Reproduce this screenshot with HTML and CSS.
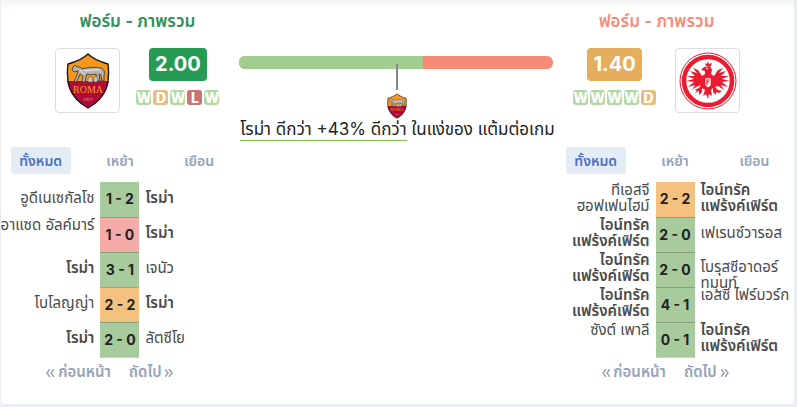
FILE: index.html
```html
<!DOCTYPE html>
<html lang="th">
<head>
<meta charset="utf-8">
<meta name="viewport" content="width=device-width,initial-scale=1.0">
<title>ฟอร์ม - ภาพรวม</title>
<link rel="stylesheet" href="styles.css">
</head>
<body>

<!-- shared drawings -->
<svg class="defs" aria-hidden="true">
  <symbol id="roma" viewBox="0 0 44 56">
    <path d="M22 1C17 6 9 9 2 11C0 27 2 44 22 55C42 44 44 27 42 11C35 9 27 6 22 1Z" fill="#f7981d"/>
    <path d="M1 28H43C41 40 34 49 22 55C10 49 3 40 1 28Z" fill="#b20a38"/>
    <path d="M22 1C17 6 9 9 2 11C0 27 2 44 22 55C42 44 44 27 42 11C35 9 27 6 22 1Z" fill="none" stroke="#191919" stroke-width="1.4"/>
    <path d="M7 14L9 12L11 14L14 14L16 16C21 14 29 14 35 15C38 16 39 19 38 23L38 28H36L35 22L33 21L34 28H31L30 21C27 22 24 22 21 21L20 24L19 29H16L17 23L14 21L12 26L10 29H8L11 22L12 18L8 19L6 17Z" fill="#b4b4b1" stroke="#30302d" stroke-width=".8"/>
    <path d="M17 17C22 19 27 16 34 17M14 17L18 21" fill="none" stroke="#eee" stroke-width="1"/>
    <path d="M22 29L22 26L24 23L26 25L27 29ZM28 29L28 25L30 23L32 26L31 29Z" fill="#d1c8bd" stroke="#41413e" stroke-width=".5"/>
    <text x="22" y="40" class="roma-name">ROMA</text>
    <text x="22" y="48" class="roma-year">1927</text>
  </symbol>
  <symbol id="eintracht" viewBox="0 0 58 58">
    <circle cx="29" cy="29" r="28" fill="#fff" stroke="#ed1b2f" stroke-width="1"/>
    <circle cx="29" cy="29" r="24" fill="#fff" stroke="#ed1b2f" stroke-width="4.5"/>
    <path d="M26 11L28 12L29 9L30 12L33 11L32 14H27Z" fill="#ed1b2f"/>
    <path d="M25 15L31 14L33 18L32 22L35 24L39 18L44 16L40 21L47 19L42 24L50 24L43 27L51 29L43 30L49 35L42 33L45 38L39 34L36 35L39 38L43 39L40 41L37 40L37 43L34 40L34 36L32 38L33 44L30 42L29 47L27 42L24 44L26 38L23 36L23 40L20 43L20 39L16 41L18 38L15 38L20 36L22 33L17 35L13 38L16 33L9 35L15 30L7 29L15 27L8 24L16 24L11 19L18 21L14 16L19 18L23 24L26 22L26 19L22 18Z" fill="#ed1b2f"/>
    <path d="M26 26H32V33L29 36L26 33Z" fill="#fff" stroke="#ed1b2f" stroke-width=".6"/>
    <path d="M28 33V28H31M28 30H30" fill="none" stroke="#ed1b2f" stroke-width="1.2"/>
    <path d="M27 16L29 17" stroke="#fff"/>
  </symbol>
  <symbol id="prev" viewBox="0 0 8 8">
    <path d="M4 0L1 4L4 8M8 0L5 4L8 8" fill="none" stroke="currentColor" stroke-width="1.5"/>
  </symbol>
  <symbol id="next" viewBox="0 0 8 8">
    <path d="M0 0L3 4L0 8M4 0L7 4L4 8" fill="none" stroke="currentColor" stroke-width="1.5"/>
  </symbol>
</svg>

<main class="card">

  <section class="team home">
    <h2>ฟอร์ม - ภาพรวม</h2>
    <div class="summary">
      <div class="crest"><svg class="logo-roma" role="img" aria-label="โรม่า"><use href="#roma"/></svg></div>
      <div class="form">
        <span class="ppg">2.00</span>
        <div class="results"><span class="w">W</span><span class="d">D</span><span class="w">W</span><span class="l">L</span><span class="w">W</span></div>
      </div>
    </div>
    <div class="tabs">
      <button type="button" class="active">ทั้งหมด</button>
      <button type="button">เหย้า</button>
      <button type="button">เยือน</button>
    </div>
    <table class="matches">
      <tr><td><div class="name">อูดีเนเซกัลโช</div></td><td class="score win">1 - 2</td><td><div class="name"><b>โรม่า</b></div></td></tr>
      <tr><td><div class="name top">อาแซด อัลค์มาร์</div></td><td class="score loss">1 - 0</td><td><div class="name"><b>โรม่า</b></div></td></tr>
      <tr><td><div class="name"><b>โรม่า</b></div></td><td class="score win">3 - 1</td><td><div class="name">เจนัว</div></td></tr>
      <tr><td><div class="name">โบโลญญ่า</div></td><td class="score draw">2 - 2</td><td><div class="name"><b>โรม่า</b></div></td></tr>
      <tr><td><div class="name"><b>โรม่า</b></div></td><td class="score win">2 - 0</td><td><div class="name">ลัตซีโย</div></td></tr>
    </table>
    <div class="pager">
      <button type="button"><svg><use href="#prev"/></svg> ก่อนหน้า</button>
      <button type="button">ถัดไป <svg><use href="#next"/></svg></button>
    </div>
  </section>

  <section class="compare">
    <div class="bar"><div class="bar-home" style="width:58.6%"></div></div>
    <div class="marker"><svg class="logo-small" role="img" aria-label="โรม่า"><use href="#roma"/></svg></div>
    <p><span class="better">โรม่า ดีกว่า +43% ดีกว่า</span> ในแง่ของ แต้มต่อเกม</p>
  </section>

  <section class="team away">
    <h2>ฟอร์ม - ภาพรวม</h2>
    <div class="summary">
      <div class="form">
        <span class="ppg">1.40</span>
        <div class="results"><span class="w">W</span><span class="w">W</span><span class="w">W</span><span class="w">W</span><span class="d">D</span></div>
      </div>
      <div class="crest"><svg class="logo-eintracht" role="img" aria-label="ไอน์ทรัค แฟร้งค์เฟิร์ต"><use href="#eintracht"/></svg></div>
    </div>
    <div class="tabs">
      <button type="button" class="active">ทั้งหมด</button>
      <button type="button">เหย้า</button>
      <button type="button">เยือน</button>
    </div>
    <table class="matches">
      <tr><td><div class="name">ทีเอสจี<br>ฮอฟเฟนไฮม์</div></td><td class="score draw">2 - 2</td><td><div class="name"><b>ไอน์ทรัค<br>แฟร้งค์เฟิร์ต</b></div></td></tr>
      <tr><td><div class="name"><b>ไอน์ทรัค<br>แฟร้งค์เฟิร์ต</b></div></td><td class="score win">2 - 0</td><td><div class="name">เฟเรนซ์วารอส</div></td></tr>
      <tr><td><div class="name"><b>ไอน์ทรัค<br>แฟร้งค์เฟิร์ต</b></div></td><td class="score win">2 - 0</td><td><div class="name long">โบรุสซีอาดอร์<br>ทมุนท์</div></td></tr>
      <tr><td><div class="name"><b>ไอน์ทรัค<br>แฟร้งค์เฟิร์ต</b></div></td><td class="score win">4 - 1</td><td><div class="name top">เอสซี ไฟร์บวร์ก</div></td></tr>
      <tr><td><div class="name top">ซังต์ เพาลี</div></td><td class="score win">0 - 1</td><td><div class="name"><b>ไอน์ทรัค<br>แฟร้งค์เฟิร์ต</b></div></td></tr>
    </table>
    <div class="pager">
      <button type="button"><svg><use href="#prev"/></svg> ก่อนหน้า</button>
      <button type="button">ถัดไป <svg><use href="#next"/></svg></button>
    </div>
  </section>

</main>

</body>
</html>
```
FILE: styles.css
```css
*{
  box-sizing:border-box;
}

html{
  background:#eaeef3;
}

body{
  margin:0 3px 0 1px;
  font-family:Inter,"Noto Sans Thai","Noto Sans",sans-serif;
  font-size:15px;
  line-height:16px;
  color:#4a4a4a;
}

.defs{
  display:none;
}

.card{
  display:grid;
  grid-template-columns:3fr 4fr 3fr;
  padding:10px 0 24px;
  border-radius:0 0 4px 4px;
  background:linear-gradient(#f3f5f5,#ffffff 9px);
}

h2{
  margin:0 0 16px;
  font-size:17px;
  line-height:22px;
  font-weight:600;
  text-align:center;
}

.home h2{
  color:#2a915a;
}

.away h2{
  color:#f68c78;
}

.summary{
  display:flex;
  justify-content:center;
  gap:16px;
}

.away .summary{
  gap:19px;
}

.home h2,
.home .summary{
  padding-left:35px;
}

.away h2,
.away .summary{
  padding-right:37px;
}

.crest{
  display:flex;
  align-items:center;
  justify-content:center;
  width:65px;
  height:65px;
  border:1px solid #dadde8;
  border-radius:4px;
  background:#ffffff;
}

.logo-roma{
  width:44px;
  height:56px;
}

.logo-eintracht{
  width:58px;
  height:58px;
}

.logo-small{
  width:20px;
  height:26px;
}

.roma-name{
  font-family:"Liberation Serif",serif;
  font-size:10px;
  fill:#f7981d;
  text-anchor:middle;
}

.roma-year{
  font-family:"Liberation Serif",serif;
  font-size:5px;
  fill:#f3b183;
  text-anchor:middle;
}

.form{
  display:flex;
  flex-direction:column;
  align-items:center;
  gap:9px;
}

.ppg{
  padding:0 6px;
  border-radius:4px;
  font-size:20px;
  line-height:33px;
  font-weight:700;
  color:#ffffff;
}

.home .ppg{
  background:#259b54;
}

.away .ppg{
  background:#e4ae5d;
}

.results{
  display:flex;
  gap:2px;
}

.results span{
  width:15px;
  border-radius:3px;
  font-size:14px;
  line-height:15px;
  font-weight:800;
  text-align:center;
  color:#ffffff;
}

.w{
  background:#b3d8a4;
}

.d{
  background:#e9bd77;
}

.l{
  background:#c97476;
}

button{
  padding:0;
  border:0;
  font-family:inherit;
  font-size:15px;
  line-height:16px;
  font-weight:600;
  color:#94a3bb;
  background:none;
  cursor:pointer;
}

.tabs{
  display:grid;
  grid-template-columns:1fr 1fr 1fr;
  margin-top:34px;
}

.tabs button{
  justify-self:center;
  width:60px;
  height:27px;
  border-radius:3px;
  font-size:14px;
}

.tabs .active{
  color:#4a72c4;
  background:#e4ecf6;
}

.matches{
  width:100%;
  margin-top:8px;
  table-layout:fixed;
  border-collapse:collapse;
}

.matches td{
  height:35px;
  padding:0;
}

.matches .score{
  width:39px;
  border-bottom:1px solid rgba(0,0,0,.2);
  font-size:14px;
  font-weight:700;
  text-align:center;
  white-space:nowrap;
  color:#222222;
}

.win{
  background:#a7cb9d;
}

.draw{
  background:#f5c17e;
}

.loss{
  background:#f5aba8;
}

.name{
  display:flex;
  flex-direction:column;
  align-items:flex-start;
  justify-content:center;
  height:35px;
  padding:0 0 3px 6px;
  white-space:nowrap;
}

.name b{
  font-weight:600;
}

td:first-child .name{
  align-items:flex-end;
  padding:0 6px 3px 0;
  text-align:right;
}

.name.top{
  justify-content:flex-start;
}

.name.long{
  display:block;
  padding-top:7px;
}

.pager{
  display:flex;
  justify-content:center;
  gap:18px;
  margin-top:6px;
  padding-right:20px;
}

.pager svg{
  width:8px;
  height:8px;
}

.compare{
  padding-top:46px;
}

.bar{
  height:13px;
  margin-right:3px;
  border-radius:6px;
  overflow:hidden;
  background:#f68c78;
}

.bar-home{
  height:100%;
  background:#a2cd91;
}

.marker{
  display:flex;
  flex-direction:column;
  align-items:center;
  gap:3px;
  position:relative;
  margin-top:-5px;
}

.marker:before{
  content:"";
  width:2px;
  height:26px;
  background:#878787;
}

.compare p{
  margin:0;
  font-size:17px;
  line-height:21px;
  text-align:center;
  white-space:nowrap;
  color:#222222;
}

.better{
  display:inline-block;
  border-bottom:1px solid #7bc142;
}

@media(max-width:700px){
  .card{
    grid-template-columns:1fr;
  }
}
```
